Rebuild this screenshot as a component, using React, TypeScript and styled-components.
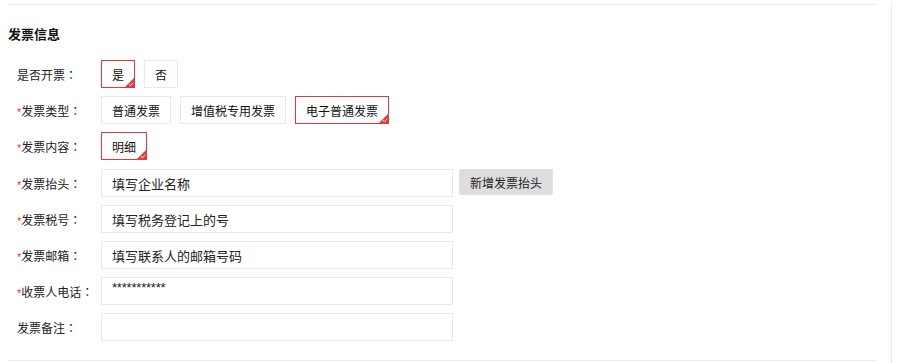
import React from "react";
import styled, { createGlobalStyle } from "styled-components";

const Global = createGlobalStyle`
  html, body { margin: 0; padding: 0; background: #fff; }
  body { font-family: "Microsoft YaHei", "Noto Sans CJK SC", "Liberation Sans", sans-serif; font-size: 12px; color: #333; }
  * { box-sizing: border-box; }
`;

const Page = styled.div`
  display: flex;
  width: 902px;
  height: 363px;
  overflow: hidden;
`;

const Section = styled.div`
  margin-left: 8px;
  margin-top: 4px;
  width: 868px;
  border-top: 1px solid #ececec;
  border-bottom: 1px solid #ececec;
  height: 357px;
`;

const SideRule = styled.div`
  margin-left: 15px;
  margin-top: 2px;
  border-left: 1px solid #ececec;
  height: 361px;
`;

const Title = styled.h3`
  margin: 19px 0 0 0;
  font-size: 13px;
  line-height: 20px;
  font-weight: bold;
  color: #111;
`;

const Form = styled.div`
  margin-top: 16px;
  padding-left: 9px;
  display: flex;
  flex-direction: column;
  gap: 8px;
`;

const Row = styled.div<{ $extraTop?: number }>`
  display: flex;
  align-items: center;
  height: 28px;
  margin-top: ${(p) => p.$extraTop ?? 0}px;
`;

const Label = styled.div`
  width: 84px;
  flex: none;
  font-size: 12px;
  color: #222;
  white-space: nowrap;
`;

const Colon = styled.span`
  font-family: "Noto Sans CJK JP", "Noto Sans CJK SC", sans-serif;
`;

const Star = styled.span`
  color: #e4393c;
  font-family: "Liberation Sans", sans-serif;
  font-size: 11px;
`;

const Options = styled.div`
  display: flex;
  gap: 9px;
`;

const Option = styled.div<{ $selected?: boolean }>`
  position: relative;
  height: 28px;
  padding: 0 10px;
  display: flex;
  align-items: center;
  border: 1px solid ${(p) => (p.$selected ? "#e4393c" : "#e9e9e9")};
  background: #fff;
  font-size: 12px;
  color: #111;
  white-space: nowrap;
`;

const Corner = styled.svg`
  position: absolute;
  right: 0;
  bottom: 0;
  width: 9px;
  height: 9px;
`;

const Input = styled.input`
  width: 352px;
  height: 28px;
  border: 1px solid #e9e9e9;
  padding: 0 10px;
  font-family: "Microsoft YaHei", "Noto Sans CJK SC", "Liberation Sans", sans-serif;
  font-size: 13px;
  color: #222;
  outline: none;
  background: #fff;
`;

const Masked = styled(Input)`
  font-family: "Liberation Sans", sans-serif;
  font-size: 13px;
  padding-top: 0;
  padding-bottom: 8px;
  letter-spacing: -0.2px;
`;

const Button = styled.button`
  margin-left: 6px;
  height: 26px;
  padding: 0 10px;
  background: #dddddd;
  border: 1px solid #e4e4e4;
  font-family: "Microsoft YaHei", "Noto Sans CJK SC", "Liberation Sans", sans-serif;
  font-size: 12px;
  color: #222;
  cursor: pointer;
  align-self: flex-start;
`;

const Check = () => (
  <Corner viewBox="0 0 9 9">
    <polygon points="9,0 9,9 0,9" fill="#e4393c" />
    <polyline points="4,6.5 5.5,7.8 8,4.8" fill="none" stroke="#fff" strokeWidth="1" />
  </Corner>
);

const Opt = ({ text, selected }: { text: string; selected?: boolean }) => (
  <Option $selected={selected}>
    {text}
    {selected && <Check />}
  </Option>
);

const FieldLabel = ({ text, required }: { text: string; required?: boolean }) => (
  <Label>
    {required && <Star>*</Star>}
    {text}
    <Colon>：</Colon>
  </Label>
);

export default function App() {
  return (
    <Page>
      <Global />
      <Section>
        <Title>发票信息</Title>
        <Form>
          <Row>
            <FieldLabel text="是否开票" />
            <Options>
              <Opt text="是" selected />
              <Opt text="否" />
            </Options>
          </Row>
          <Row>
            <FieldLabel text="发票类型" required />
            <Options>
              <Opt text="普通发票" />
              <Opt text="增值税专用发票" />
              <Opt text="电子普通发票" selected />
            </Options>
          </Row>
          <Row>
            <FieldLabel text="发票内容" required />
            <Options>
              <Opt text="明细" selected />
            </Options>
          </Row>
          <Row $extraTop={1}>
            <FieldLabel text="发票抬头" required />
            <Input readOnly value="填写企业名称" />
            <Button>新增发票抬头</Button>
          </Row>
          <Row>
            <FieldLabel text="发票税号" required />
            <Input readOnly value="填写税务登记上的号" />
          </Row>
          <Row>
            <FieldLabel text="发票邮箱" required />
            <Input readOnly value="填写联系人的邮箱号码" />
          </Row>
          <Row>
            <FieldLabel text="收票人电话" required />
            <Masked readOnly value="***********" />
          </Row>
          <Row>
            <FieldLabel text="发票备注" />
            <Input readOnly value="" />
          </Row>
        </Form>
      </Section>
      <SideRule />
    </Page>
  );
}
